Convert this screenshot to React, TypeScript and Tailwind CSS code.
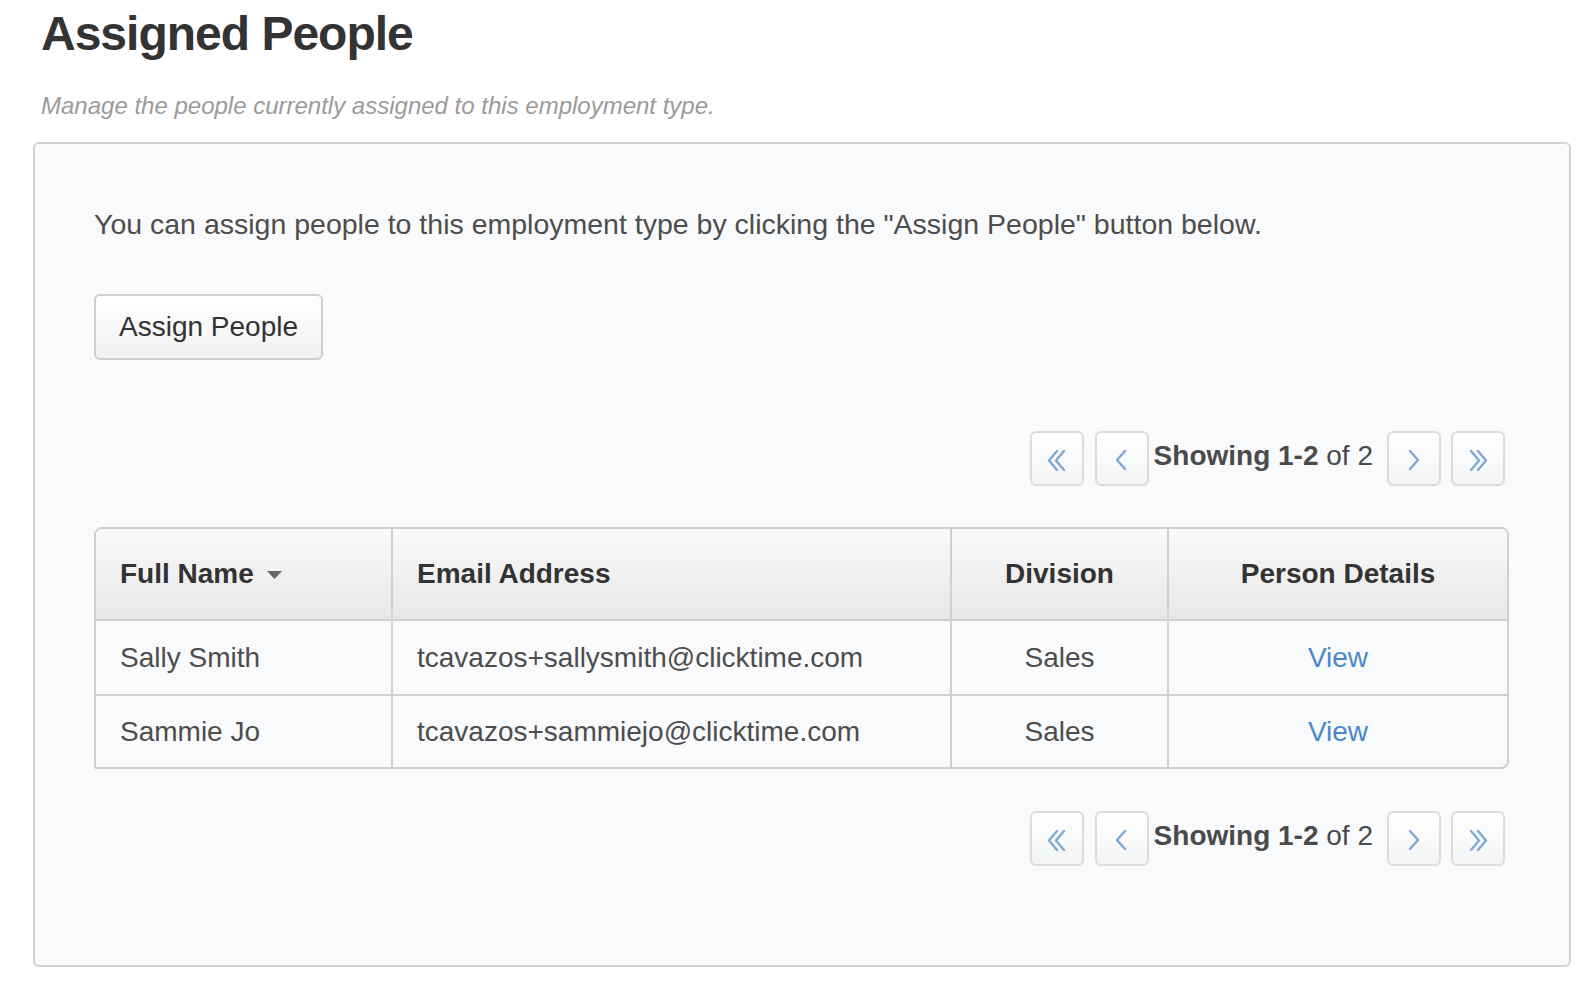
import React from "react";

const people = [
    {name: "Sally Smith", email: "tcavazos+sallysmith@clicktime.com", division: "Sales"},
    {name: "Sammie Jo", email: "tcavazos+sammiejo@clicktime.com", division: "Sales"},
]

const Chevron = ({dir, double}: { dir: "left" | "right"; double?: boolean }) => {
    const single = dir === "left" ? "M9 1 L1 10 L9 19" : "M1 1 L9 10 L1 19"
    return (
        <svg width={double ? 20 : 11} height="21" viewBox={double ? "0 0 20 21" : "0 0 11 21"} fill="none"
             stroke="#7ea8d8" strokeWidth="2.4" strokeLinecap="round" strokeLinejoin="round">
            {double ? (
                dir === "left" ? (
                    <>
                        <path d="M10 1 L2 10.5 L10 20"/>
                        <path d="M17 1 L9 10.5 L17 20"/>
                    </>
                ) : (
                    <>
                        <path d="M3 1 L11 10.5 L3 20"/>
                        <path d="M10 1 L18 10.5 L10 20"/>
                    </>
                )
            ) : (
                <path d={single}/>
            )}
        </svg>
    )
}

const PageButton = ({children}: { children: React.ReactNode }) => (
    <button type="button"
            className="flex items-center justify-center w-[54px] h-[55px] pt-[3px] rounded-[6px] border-2 border-[#dcdcdc] bg-linear-to-b from-[#ffffff] to-[#f3f4f5]">
        {children}
    </button>
)

const Pager = () => (
    <div className="flex justify-end items-start mr-[4px]">
        <PageButton><Chevron dir="left" double/></PageButton>
        <div className="ml-[11px]"><PageButton><Chevron dir="left"/></PageButton></div>
        <span className="ml-[5px] mt-[5px] text-[28px] leading-[40px] text-[#4a4a4a]">
            <b className="font-bold">Showing 1-2</b> of 2
        </span>
        <div className="ml-[14px]"><PageButton><Chevron dir="right"/></PageButton></div>
        <div className="ml-[10px]"><PageButton><Chevron dir="right" double/></PageButton></div>
    </div>
)

export default function App() {
    return (
        <div className="min-h-[982px] bg-white font-['Liberation_Sans',Arial,sans-serif]">
            <div className="pl-[41px] pt-[10px]">
                <h1 className="text-[48px] leading-[48px] font-bold tracking-[-1px] text-[#333333]">Assigned People</h1>
                <p className="mt-[36px] text-[24px] leading-[24px] italic text-[#9b9b9b]">
                    Manage the people currently assigned to this employment type.
                </p>
            </div>

            <div className="ml-[33px] mr-[9px] mt-[24px] rounded-[6px] border-2 border-[#d2d2d2] bg-[#f9fafc] pl-[59px] pr-[60px] pt-[60px] pb-[99px]">
                <p className="text-[28.5px] leading-[40px] text-[#4d4d4d]">
                    You can assign people to this employment type by clicking the "Assign People" button below.
                </p>

                <button type="button"
                        className="mt-[50px] px-[23px] py-[11px] rounded-[6px] border-2 border-[#cfcfcf] bg-linear-to-b from-[#ffffff] to-[#f2f2f2] text-[28px] leading-[40px] text-[#333333]">
                    Assign People
                </button>

                <div className="mt-[71px]">
                    <Pager/>
                </div>

                <div className="mt-[41px] rounded-[8px] rounded-bl-[2px] border-2 border-[#d0d0d0] overflow-hidden">
                    <table className="w-full table-fixed border-collapse text-[28px]">
                        <colgroup>
                            <col className="w-[296px]"/>
                            <col className="w-[559px]"/>
                            <col className="w-[217px]"/>
                            <col/>
                        </colgroup>
                        <thead>
                        <tr className="h-[91px] bg-linear-to-b from-[#fafafa] to-[#e7e7e7] text-[#333333]">
                            <th className="text-left font-bold pl-[24px]">
                                <span className="inline-flex items-center">
                                    Full Name
                                    <svg className="ml-[13px] mt-[2px]" width="15" height="8" viewBox="0 0 15 8">
                                        <path d="M0 0 H15 L7.5 8 Z" fill="#666666"/>
                                    </svg>
                                </span>
                            </th>
                            <th className="text-left font-bold pl-[24px] border-l-2 border-[#d0d0d0]">Email Address</th>
                            <th className="text-center font-bold border-l-2 border-[#d0d0d0]">Division</th>
                            <th className="text-center font-bold border-l-2 border-[#d0d0d0]">Person Details</th>
                        </tr>
                        </thead>
                        <tbody className="text-[#4d4d4d]">
                        {people.map((p, i) => (
                            <tr key={p.email} className={(i === 0 ? "h-[75px]" : "h-[72px]") + " border-t-2 border-[#d0d0d0]"}>
                                <td className="pl-[24px]">{p.name}</td>
                                <td className="pl-[24px] border-l-2 border-[#d0d0d0]">{p.email}</td>
                                <td className="text-center border-l-2 border-[#d0d0d0]">{p.division}</td>
                                <td className="text-center border-l-2 border-[#d0d0d0]">
                                    <a href="#" className="text-[#4a88c9]">View</a>
                                </td>
                            </tr>
                        ))}
                        </tbody>
                    </table>
                </div>

                <div className="mt-[42px]">
                    <Pager/>
                </div>
            </div>
        </div>
    )
}
